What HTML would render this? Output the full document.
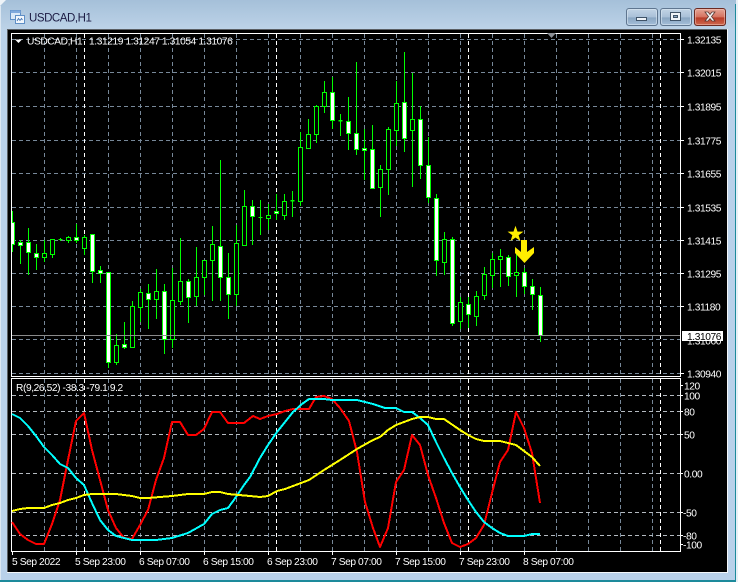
<!DOCTYPE html>
<html><head><meta charset="utf-8"><title>USDCAD,H1</title>
<style>
html,body{margin:0;padding:0;width:738px;height:582px;overflow:hidden;background:#b9d1ea}
svg{display:block;position:absolute;left:0;top:0}
text{font-family:"Liberation Sans",sans-serif;font-size:10.2px;letter-spacing:-.4px;fill:#fff}
</style></head><body>
<svg width="738" height="582" viewBox="0 0 738 582" xmlns="http://www.w3.org/2000/svg">
<defs>
<linearGradient id="f" x1="0" y1="0" x2="0" y2="1"><stop offset="0" stop-color="#a5c0d9"/><stop offset="1" stop-color="#bdd3e8"/></linearGradient>
<linearGradient id="b" x1="0" y1="0" x2="0" y2="1"><stop offset="0" stop-color="#c3d5e6"/><stop offset=".5" stop-color="#a9c0d8"/><stop offset=".55" stop-color="#8aa6c2"/><stop offset="1" stop-color="#a6c0da"/></linearGradient>
<linearGradient id="r" x1="0" y1="0" x2="0" y2="1"><stop offset="0" stop-color="#e6a99a"/><stop offset=".5" stop-color="#d5725f"/><stop offset=".55" stop-color="#b83c28"/><stop offset="1" stop-color="#cf6a50"/></linearGradient>
<clipPath id="c"><rect x="12" y="34" width="668" height="342"/></clipPath>
</defs>
<rect width="738" height="582" fill="#b9d1ea"/>
<rect width="738" height="30" fill="url(#f)"/>
<path d="M0 0H6L0 6Z" fill="#eef3f8"/>
<rect x="0" y="6" width="1" height="576" fill="#dbe7f2"/>
<rect x="736" y="0" width="2" height="582" fill="#e8f0f6"/>
<rect x="735" y="4" width="1" height="578" fill="#1d8a9b"/>
<rect x="0" y="580" width="736" height="2" fill="#1d8a9b"/>
<rect x="7" y="29" width="721" height="544" fill="#f4f7fa"/>
<rect x="7" y="29" width="720" height="543" fill="#5a5f64"/>
<rect x="8" y="30" width="719" height="542" fill="#000"/>

<!-- title icon -->
<rect x="10.500" y="10.500" width="10" height="9" fill="#dbe9f7" stroke="#5f8fc6"/>
<rect x="10.500" y="10.500" width="10" height="2.500" fill="#7fa9dc"/>
<rect x="15.500" y="15.500" width="9" height="8" fill="#f2f7fc" stroke="#5f8fc6"/>
<path d="M17 21l1.500-2.500 1.500 2 1.500-2 1 1.500" fill="none" stroke="#3c6fb0" stroke-width=".8"/>
<text x="29" y="21.500" style="font-size:11.5px;letter-spacing:-.45px;fill:#1c1c44">USDCAD,H1</text>

<!-- window buttons -->
<rect x="626.500" y="8.500" width="31" height="17" rx="2.500" fill="url(#b)" stroke="#5f7690"/>
<rect x="627.500" y="9.500" width="29" height="15" rx="2" fill="none" stroke="#dbe7f2" stroke-opacity=".6"/>
<rect x="636.500" y="17.500" width="10" height="3" fill="#eef3f8" stroke="#3f5368"/>
<rect x="660.500" y="8.500" width="31" height="17" rx="2.500" fill="url(#b)" stroke="#5f7690"/>
<rect x="661.500" y="9.500" width="29" height="15" rx="2" fill="none" stroke="#dbe7f2" stroke-opacity=".6"/>
<rect x="670.500" y="12.500" width="10" height="8" fill="#eef3f8" stroke="#3f5368"/>
<rect x="673.500" y="15.500" width="4" height="2" fill="#8aa6c2" stroke="#3f5368"/>
<rect x="694.500" y="8.500" width="31" height="17" rx="2.500" fill="url(#r)" stroke="#6b2a22"/>
<rect x="695.500" y="9.500" width="29" height="15" rx="2" fill="none" stroke="#f3c9bd" stroke-opacity=".5"/>
<path d="M705 12h3l2 2.500 2-2.500h3l-3.500 4.500 3.500 4.500h-3l-2-2.500-2 2.500h-3l3.500-4.500z" fill="#f4f4f4" stroke="#5a3a34" stroke-width=".8"/>

<!-- main grid -->
<g fill="none" stroke="#778899" stroke-dasharray="4 3" shape-rendering="crispEdges">
<path d="M12 39.500H680M12 72.500H680M12 106.500H680M12 140.500H680M12 173.500H680M12 207.500H680M12 240.500H680M12 273.500H680M12 306.500H680M12 339.500H680M12 373.500H680"/>
<path d="M44.500 34V376M76.500 34V376M108.500 34V376M140.500 34V376M172.500 34V376M204.500 34V376M236.500 34V376M268.500 34V376M300.500 34V376M332.500 34V376M364.500 34V376M396.500 34V376M428.500 34V376M460.500 34V376M492.500 34V376M524.500 34V376M556.500 34V376M588.500 34V376M620.500 34V376M652.500 34V376"/>
<path d="M44.500 379V551M76.500 379V551M108.500 379V551M140.500 379V551M172.500 379V551M204.500 379V551M236.500 379V551M268.500 379V551M300.500 379V551M332.500 379V551M364.500 379V551M396.500 379V551M428.500 379V551M460.500 379V551M492.500 379V551M524.500 379V551M556.500 379V551M588.500 379V551M620.500 379V551M652.500 379V551"/>
<path stroke="#b4bac0" d="M12 395.500H680M12 411.500H680M12 434.500H680M12 473.500H680M12 512.500H680M12 535.500H680"/>
<path stroke="#fff" d="M84.500 34V376M276.500 34V376M468.500 34V376M660.500 34V376M84.500 379V551M276.500 379V551M468.500 379V551M660.500 379V551"/>
</g>

<!-- candles -->
<g clip-path="url(#c)" shape-rendering="crispEdges">
<path fill="none" stroke="#00ff00" d="M12.500 211V252M20.500 240V264M28.500 228V275M36.500 244V270M44.500 240V262M52.500 239V258M60.500 238V241M68.500 236V243M76.500 224V243M84.500 235V255M92.500 234V283M100.500 266V283M108.500 272V368M116.500 334V365M124.500 322V349M132.500 301V348M140.500 289V322M148.500 284V329M156.500 269V319M164.500 284V354M172.500 268V348M180.500 238V305M188.500 279V323M196.500 247V306M204.500 260V295M212.500 226V301M220.500 160V301M228.500 253V319M236.500 225V306M244.500 190V245M252.500 200V245M260.500 200V235M268.500 204V230M276.500 194V220M284.500 194V220M292.500 191V217M300.500 132V206M308.500 119V148M316.500 105V143M324.500 81V113M332.500 77V129M340.500 114V136M348.500 97V150M356.500 62V155M364.500 129V180M372.500 125V189M380.500 165V217M388.500 127V195M396.500 81V146M404.500 52V152M412.500 73V187M420.500 106V179M428.500 137V203M436.500 194V276M444.500 232V275M452.500 237V326M460.500 297V329M468.500 297V328M476.500 291V326M484.500 267V300M492.500 253V288M500.500 249V287M508.500 255V286M516.500 250V297M524.500 268V294M532.500 279V310M540.500 287V342"/>
<path fill="#00ff00" d="M58.500 239h4v1h-4zM258.500 217h4v1h-4zM290.500 200h4v1.500h-4zM338.500 120h4v1.500h-4z"/>
<path fill="#fff" stroke="#00ff00" d="M10.500 222.500h4v22h-4zM18.500 242.500h4v3h-4zM26.500 242.500h4v10h-4zM34.500 253.500h4v4h-4zM74.500 237.500h4v3h-4zM90.500 234.500h4v37h-4zM98.500 270.500h4v3h-4zM106.500 272.500h4v90h-4zM122.500 344.500h4v3h-4zM146.500 293.500h4v6h-4zM162.500 291.500h4v48h-4zM186.500 281.500h4v16h-4zM218.500 246.500h4v31h-4zM226.500 277.500h4v17h-4zM250.500 206.500h4v10h-4zM274.500 211.500h4v2h-4zM330.500 92.500h4v28h-4zM346.500 121.500h4v12h-4zM354.500 133.500h4v16h-4zM362.500 148.500h4v2h-4zM370.500 149.500h4v39h-4zM402.500 102.500h4v36h-4zM418.500 119.500h4v46h-4zM426.500 165.500h4v32h-4zM434.500 198.500h4v62h-4zM450.500 239.500h4v84h-4zM466.500 304.500h4v10h-4zM506.500 257.500h4v19h-4zM522.500 272.500h4v14h-4zM530.500 286.500h4v8h-4zM538.500 295.500h4v40h-4z"/>
<path fill="#000" stroke="#00ff00" d="M42.500 253.500h4v4h-4zM50.500 239.500h4v15h-4zM66.500 237.500h4v3h-4zM82.500 237.500h4v11h-4zM114.500 345.500h4v17h-4zM130.500 306.500h4v41h-4zM138.500 292.500h4v15h-4zM154.500 291.500h4v8h-4zM170.500 300.500h4v39h-4zM178.500 281.500h4v20h-4zM194.500 277.500h4v19h-4zM202.500 260.500h4v17h-4zM210.500 244.500h4v16h-4zM234.500 243.500h4v51h-4zM242.500 206.500h4v39h-4zM266.500 215.500h4v3h-4zM282.500 201.500h4v14h-4zM298.500 147.500h4v54h-4zM306.500 134.500h4v14h-4zM314.500 106.500h4v28h-4zM322.500 92.500h4v14h-4zM378.500 169.500h4v18h-4zM386.500 129.500h4v40h-4zM394.500 103.500h4v27h-4zM410.500 119.500h4v11h-4zM442.500 239.500h4v23h-4zM458.500 302.500h4v19h-4zM474.500 296.500h4v20h-4zM482.500 274.500h4v21h-4zM490.500 259.500h4v16h-4zM498.500 256.500h4v3h-4zM514.500 272.500h4v3h-4z"/>
<rect x="12" y="335" width="668" height="1" fill="#8a8a8a"/>
</g>

<!-- star / arrow -->
<polygon points="515.500,227 517.200,231.900 522.300,232 518.200,235.100 519.700,240 515.500,237.100 511.300,240 512.800,235.100 508.700,232 513.800,231.900" fill="#ffee00" stroke="#ffee00" stroke-width=".8"/>
<polygon points="515,247 521,252 521,240 527,240 527,252 534,247 534,253 524.500,263 515,253" fill="#ffee00"/>

<!-- borders -->
<rect x="11.500" y="33.500" width="669" height="343" fill="none" stroke="#fff" shape-rendering="crispEdges"/>
<rect x="11.500" y="378.500" width="669" height="173" fill="none" stroke="#fff" shape-rendering="crispEdges"/>
<path d="M547 33h9l-4.500 5z" fill="#8a8f96"/>

<!-- ticks -->
<path fill="none" stroke="#fff" shape-rendering="crispEdges" d="M681 39.500h3M681 72.500h3M681 106.500h3M681 140.500h3M681 173.500h3M681 207.500h3M681 240.500h3M681 273.500h3M681 306.500h3M681 373.500h3M681 385.500h2M681 395.500h2M681 411.500h2M681 434.500h2M681 473.500h2M681 512.500h2M681 535.500h2M681 544.500h2M12.500 552v3M76.500 552v3M140.500 552v3M204.500 552v3M268.500 552v3M332.500 552v3M396.500 552v3M460.500 552v3M524.500 552v3"/>

<!-- indicator lines -->
<g fill="none" stroke-width="2" stroke-linejoin="round" shape-rendering="crispEdges">
<polyline stroke="#ff0000" points="12,522 20,534 28,540 36,544 44,544 52,524 60,500 68,460 76,421 84,413 92,450 100,480 108,510 116,528 124,538 132,539 140,525 148,510 156,480 164,458 172,422 180,422 188,435 196,435 204,429 212,412 220,412 228,423 236,423 244,423 253,416 260,419 268,416 277,414 285,411 293,409 309,409 316,397 324,396 332,399 340,408 349,421 357,452 365,502 373,528 380,547 388,528 396,482 404,470 412,435 420,445 428,475 436,498 444,523 452,543 460,547 468,544 476,538 484,525 492,493 500,462 508,450 516,412 524,428 532,453 540,503"/>
<polyline stroke="#00ffff" points="12,414 20,418 28,426 36,436 44,447 52,455 60,464 68,468 76,478 84,485 92,503 100,520 108,530 116,536 124,538 132,540 156,540 172,538 188,533 204,524 212,514 220,510 228,508 236,497 244,485 250,477 260,458 268,445 277,432 285,422 293,412 302,404 309,399 324,399 332,400 357,400 365,402 373,404 385,408 396,408 404,412 412,412 420,418 428,425 436,442 444,458 452,473 460,487 468,500 476,512 484,522 492,528 500,533 508,536 524,536 532,534 540,534"/>
<polyline stroke="#ffff00" points="12,511 20,509 28,508 44,508 52,505 60,503 68,500 76,498 84,495 92,494 116,494 132,496 140,498 148,498 172,496 188,494 204,494 212,492 220,492 228,494 250,496 260,497 268,496 277,491 285,489 309,480 324,470 340,460 357,449 373,440 380,437 388,430 396,425 412,419 420,417 428,417 436,419 444,419 460,430 468,435 476,439 484,441 500,441 508,443 516,445 524,451 532,457 540,466"/>
</g>

<!-- labels -->
<path d="M15 39.500h7l-3.500 3.500z" fill="#fff"/>
<text x="27" y="44.500">USDCAD,H1</text>
<text x="89" y="44.500">1.31219 1.31247 1.31054 1.31076</text>
<text x="16" y="391">R(9,26,52) -38.3 -79.1 9.2</text>
<text x="687" y="43.500">1.32135</text>
<text x="687" y="76.500">1.32015</text>
<text x="687" y="110.500">1.31895</text>
<text x="687" y="144.500">1.31775</text>
<text x="687" y="177.500">1.31655</text>
<text x="687" y="211.500">1.31535</text>
<text x="687" y="244.500">1.31415</text>
<text x="687" y="277.500">1.31295</text>
<text x="687" y="310.500">1.31180</text>
<text x="687" y="344.500">1.31060</text>
<text x="687" y="377.500">1.30940</text>
<rect x="682" y="331" width="41" height="10" fill="#fff"/>
<text x="687" y="340" style="fill:#000">1.31076</text>
<text x="684" y="389.500">120</text>
<text x="684" y="399.500">100</text>
<text x="684" y="415.500">80</text>
<text x="684" y="438.500">50</text>
<text x="684" y="477.500">0.00</text>
<text x="683" y="516.500">-50</text>
<text x="683" y="539.500">-80</text>
<text x="683" y="548.500">-100</text>
<text x="12" y="565">5 Sep 2022</text>
<text x="75" y="565">5 Sep 23:00</text>
<text x="139" y="565">6 Sep 07:00</text>
<text x="203" y="565">6 Sep 15:00</text>
<text x="267" y="565">6 Sep 23:00</text>
<text x="331" y="565">7 Sep 07:00</text>
<text x="395" y="565">7 Sep 15:00</text>
<text x="459" y="565">7 Sep 23:00</text>
<text x="523" y="565">8 Sep 07:00</text>
</svg>
</body></html>
